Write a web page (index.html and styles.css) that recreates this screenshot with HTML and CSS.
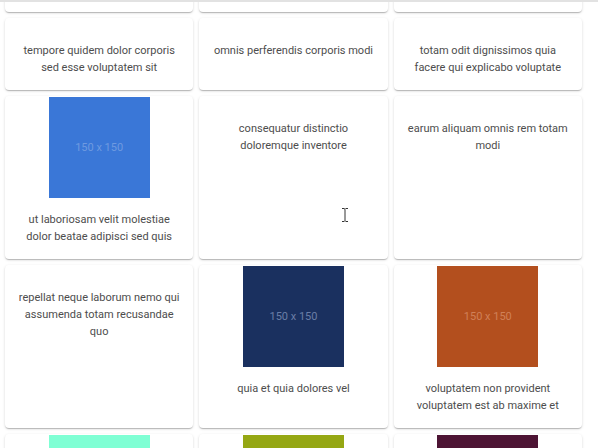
FILE: index.html
```html
<!DOCTYPE html>
<html>
<head>
<meta charset="utf-8">
<link rel="stylesheet" href="styles.css">
</head>
<body>
<div class="topbar"></div>
<div class="page">
  <div class="grid">
    <div class="card stub"></div>
    <div class="card stub"></div>
    <div class="card stub"></div>

    <div class="card"><p class="text">tempore quidem dolor corporis sed esse voluptatem sit</p></div>
    <div class="card"><p class="text">omnis perferendis corporis modi</p></div>
    <div class="card"><p class="text">totam odit dignissimos quia facere qui explicabo voluptate</p></div>

    <div class="card media"><div class="ph ph-blue">150 x 150</div><p class="text">ut laboriosam velit molestiae dolor beatae adipisci sed quis</p></div>
    <div class="card"><p class="text">consequatur distinctio doloremque inventore</p></div>
    <div class="card"><p class="text">earum aliquam omnis rem totam modi</p></div>

    <div class="card"><p class="text">repellat neque laborum nemo qui assumenda totam recusandae quo</p></div>
    <div class="card media"><div class="ph ph-navy">150 x 150</div><p class="text">quia et quia dolores vel</p></div>
    <div class="card media"><div class="ph ph-orange">150 x 150</div><p class="text">voluptatem non provident voluptatem est ab maxime et</p></div>

    <div class="card media"><div class="ph ph-aqua">150 x 150</div><p class="text">qui fuga est a eum</p></div>
    <div class="card media"><div class="ph ph-olive">150 x 150</div><p class="text">saepe unde necessitatibus rem</p></div>
    <div class="card media"><div class="ph ph-plum">150 x 150</div><p class="text">distinctio laborum qui</p></div>
  </div>
</div>
<svg class="cursor" width="8" height="14" viewBox="0 0 8 14"><path d="M1 0.5h2.2l0.8 0.8 0.8-0.8H7M4 1.3V12.7M1 13.5h2.2l0.8-0.8 0.8 0.8H7" fill="none" stroke="#333" stroke-width="1"/></svg>
</body>
</html>
```

FILE: styles.css
```css
html, body {
  margin: 0;
  padding: 0;
  background: #ffffff;
  overflow: hidden;
}
body {
  font-family: Roboto, "Noto Sans", Arial, sans-serif;
  color: #4d4d4d;
}
.topbar {
  position: fixed;
  top: 0;
  left: 0;
  right: 0;
  height: 2px;
  background: #e2e2e2;
  z-index: 5;
}
.page {
  margin-top: -60px;
  padding: 0 16px 0 5px;
}
.grid {
  display: grid;
  grid-template-columns: repeat(3, 1fr);
  gap: 6px 6px;
}
.card {
  background: #fff;
  border-radius: 4px;
  box-shadow: 0 2px 1px -1px rgba(0,0,0,0.12), 0 1px 1px 0 rgba(0,0,0,0.10), 0 1px 3px 0 rgba(0,0,0,0.14);
  padding: 24px 12px 14px;
  display: flex;
  flex-direction: column;
  align-items: center;
}
.card.stub {
  min-height: 72px;
  padding: 0;
}
.card.media {
  padding-top: 1px;
}
.text {
  margin: 0;
  font-size: 11px;
  line-height: 17px;
  text-align: center;
}
.media .text {
  margin-top: 13px;
}
.ph {
  width: 101px;
  height: 101px;
  flex: none;
  display: flex;
  align-items: center;
  justify-content: center;
  font-size: 11px;
}
.ph-blue { background: #3a77d7; color: #6e9ae0; }
.ph-navy { background: #1a305f; color: #6a7ea6; }
.ph-orange { background: #b34f1e; color: #d08058; }
.ph-aqua { background: #7fffd4; color: #b2ffe5; }
.ph-olive { background: #95a713; color: #bac85a; }
.ph-plum { background: #4d1434; color: #8a5a75; }
.cursor {
  position: fixed;
  left: 341px;
  top: 208px;
}
```
